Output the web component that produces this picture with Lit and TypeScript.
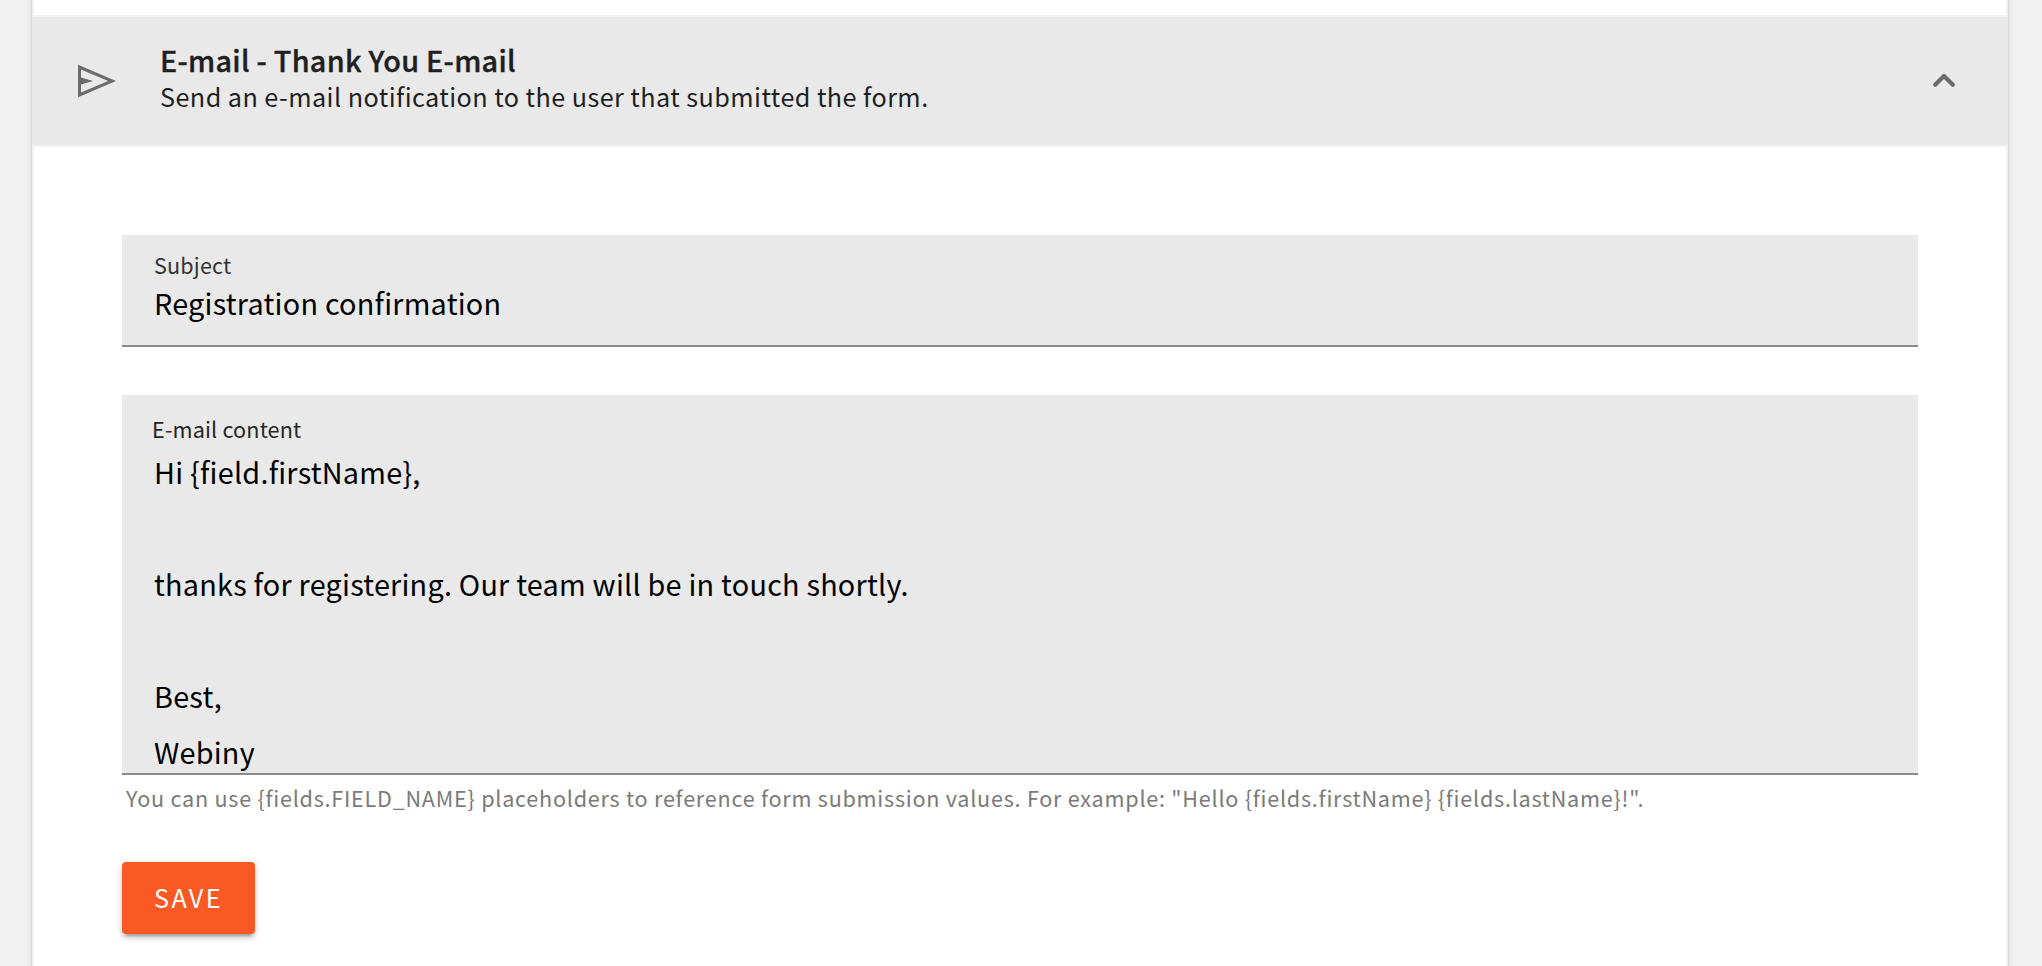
import { LitElement, html, css } from "lit";

const MESSAGE = `Hi {field.firstName},

thanks for registering. Our team will be in touch shortly.

Best,
Webiny`;

class AppRoot extends LitElement {
  static styles = css`
    :host {
      display: block;
      height: 966px;
      overflow: hidden;
      background: #f1f1f1;
      font-family: "Noto Sans CJK SC", "Open Sans", sans-serif;
      color: #1f1f1f;
    }
    * { box-sizing: border-box; }
    .card {
      height: 1100px;
      margin: -60px 34px 0 32px;
      padding-top: 75px;
      border: solid #f1f1f1;
      border-width: 0 2px;
      background: #fff;
      box-shadow: 0 4px 2px -2px rgba(0, 0, 0, 0.2), 0 2px 2px 0 rgba(0, 0, 0, 0.14),
        0 2px 6px 0 rgba(0, 0, 0, 0.12);
    }
    .header {
      display: flex;
      height: 132px;
      margin: 0 -2px;
      padding: 0 48px 0 40px;
      align-items: center;
      background: #e9e9e9;
      border: solid #f1f1f1;
      border-width: 2px 0;
    }
    .send { width: 48px; height: 48px; margin-right: 40px; flex: none; }
    .chevron { width: 32px; height: 32px; flex: none; }
    .heading { flex: 1; padding-bottom: 7px; white-space: nowrap; }
    .title {
      font-size: 28.8px;
      line-height: 37px;
      font-weight: 500;
      letter-spacing: 0.27px;
      -webkit-text-stroke: 0.4px currentColor;
    }
    .description { font-size: 25.2px; line-height: 36px; letter-spacing: 0.445px; }
    .content { padding: 88px 88px 0; }
    .field {
      background: #e9e9e9;
      border-bottom: 2px solid #8b8b8b;
      color: #000;
      padding-left: 32px;
    }
    .label { font-size: 21.6px; line-height: 31px; letter-spacing: 0.16px; color: #333; }
    .value { font-size: 28.8px; letter-spacing: 0.23px; }
    .subject { height: 112px; padding-top: 14px; margin-bottom: 48px; }
    .subject .value { margin-top: 3px; line-height: 39px; }
    .message { height: 380px; padding-top: 18px; overflow: hidden; }
    .message .label { margin-left: -2px; color: #262626; }
    .message .value { line-height: 56px; white-space: pre-wrap; }
    .hint {
      padding-left: 4px;
      margin-top: 7px;
      font-size: 21.6px;
      line-height: 31px;
      letter-spacing: 0.753px;
      color: #7a7a7a;
      white-space: nowrap;
    }
    .save {
      display: block;
      width: 133px;
      height: 72px;
      margin-top: 49px;
      padding: 0 0 2px 32px;
      border: 0;
      border-radius: 4px;
      background: #fb5924;
      color: #fff;
      font: 400 25.2px/70px "Noto Sans CJK SC", "Open Sans", sans-serif;
      letter-spacing: 2.45px;
      text-align: left;
      box-shadow: 0 6px 2px -4px rgba(0, 0, 0, 0.2), 0 4px 4px 0 rgba(0, 0, 0, 0.14),
        0 2px 10px 0 rgba(0, 0, 0, 0.12);
    }
  `;

  render() {
    return html`
      <section class="card">
        <header class="header">
          <svg class="send" viewBox="0 0 48 48" fill="#6b6b6b" fill-rule="evenodd">
            <path d="M6 7.8 44 24 6 40.2zM9 12.4v8.2L21 24 9 27.4v8.2L36.2 24z" />
          </svg>
          <div class="heading">
            <div class="title">E-mail - Thank You E-mail</div>
            <div class="description">Send an e-mail notification to the user that submitted the form.</div>
          </div>
          <svg class="chevron" viewBox="0 0 32 32" fill="none" stroke="#6b6b6b" stroke-width="4.2"
            stroke-linecap="round" stroke-linejoin="round">
            <path d="M7.2 19.8 16 11l8.8 8.8" />
          </svg>
        </header>
        <div class="content">
          <div class="field subject">
            <div class="label">Subject</div>
            <div class="value">Registration confirmation</div>
          </div>
          <div class="field message">
            <div class="label">E-mail content</div>
            <div class="value">${MESSAGE}</div>
          </div>
          <div class="hint">You can use {fields.FIELD_NAME} placeholders to reference form submission values. For example: "Hello {fields.firstName} {fields.lastName}!".</div>
          <button class="save">SAVE</button>
        </div>
      </section>
    `;
  }
}
customElements.define("app-root", AppRoot);
